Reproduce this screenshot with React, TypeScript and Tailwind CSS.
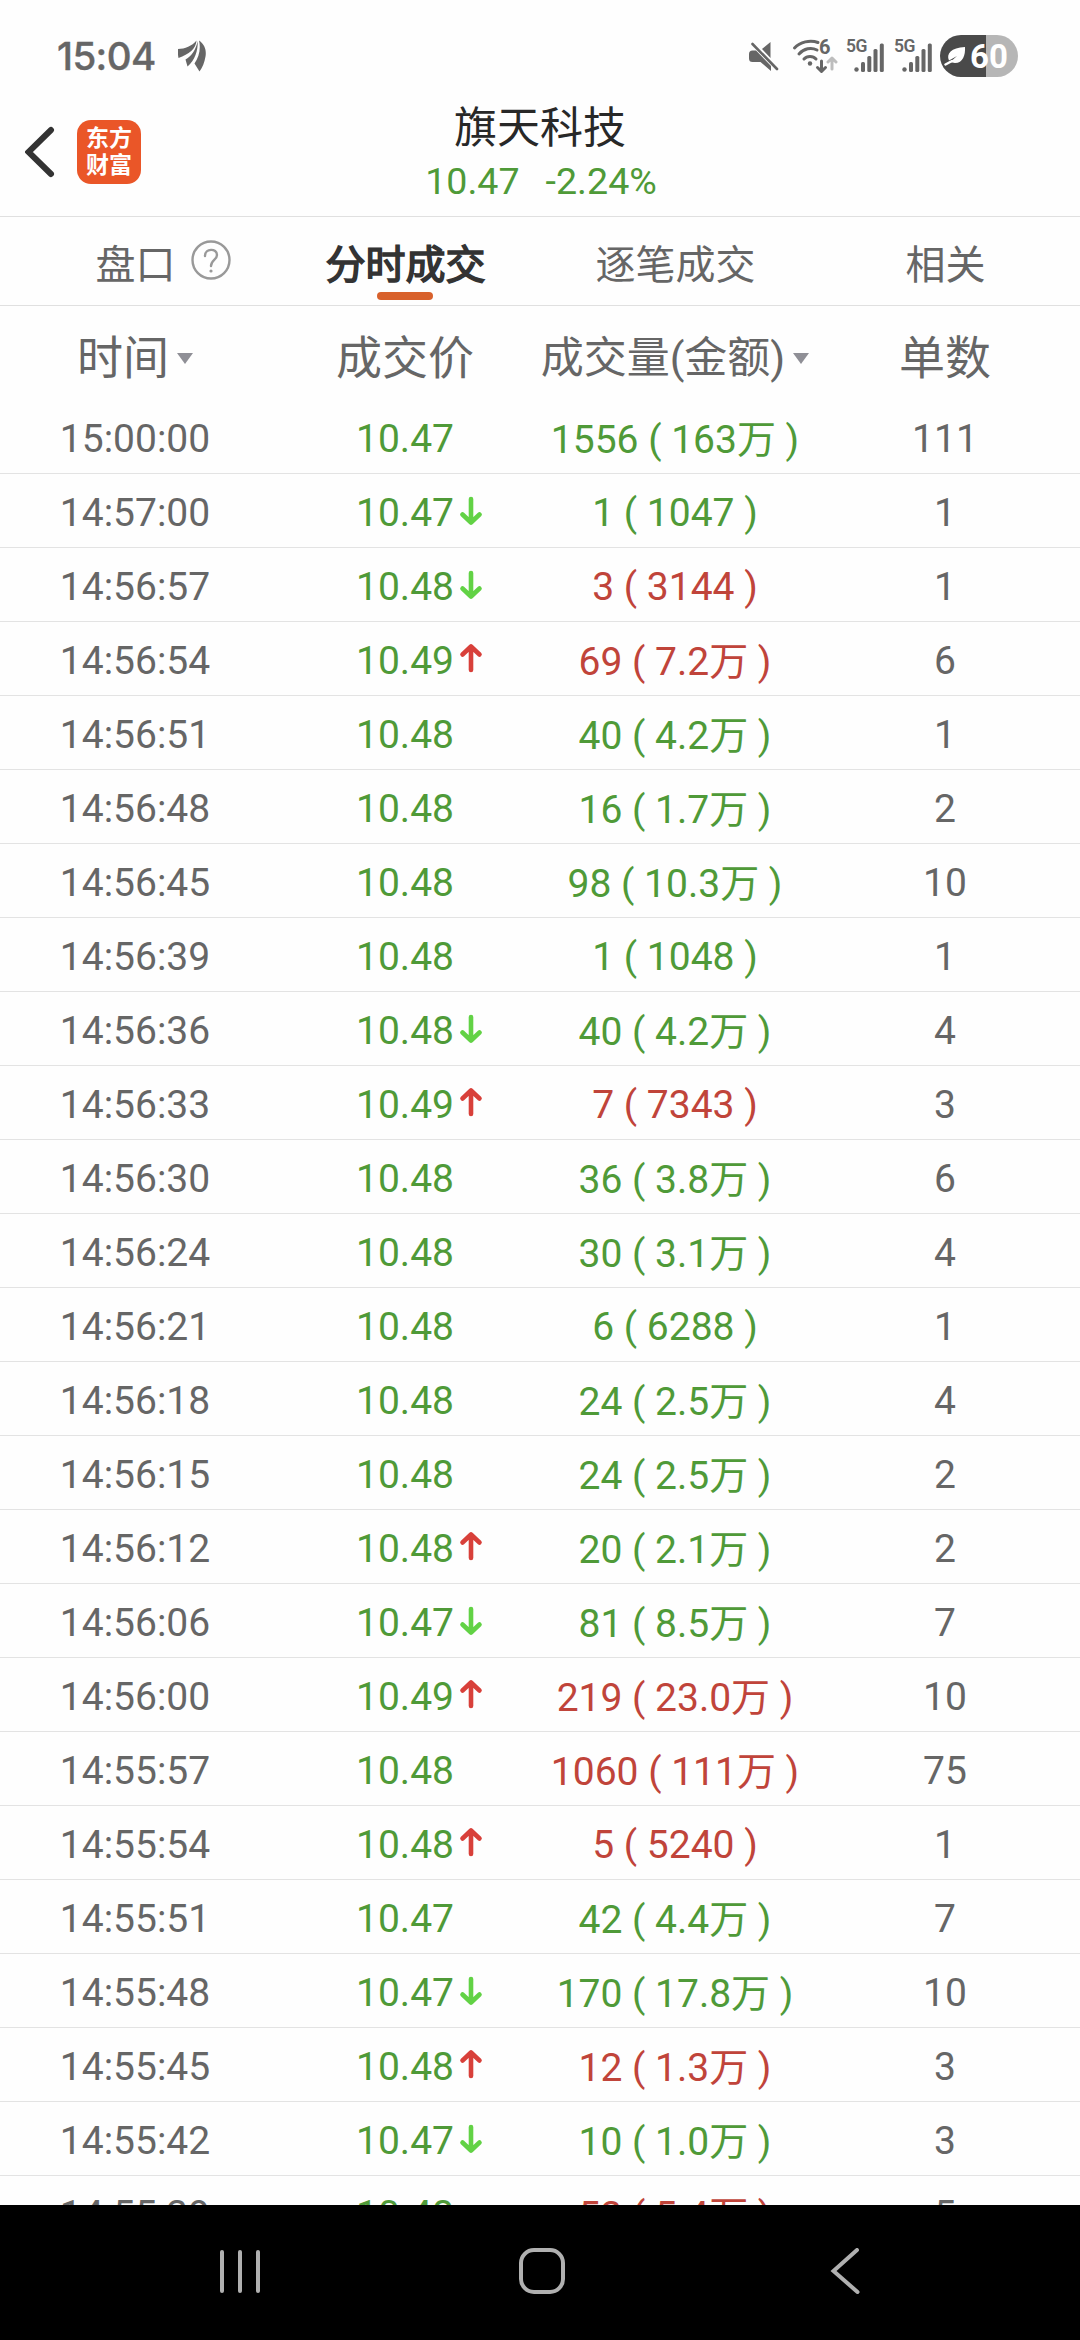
import { clsx } from "clsx";

type Trade = {
  time: string;
  price: string;
  move?: "up" | "down";
  volume: string;
  side: "buy" | "sell";
  count: number;
};

const tabs = [
  { label: "盘口", help: true },
  { label: "分时成交", active: true },
  { label: "逐笔成交" },
  { label: "相关" },
];

const trades: Trade[] = [
  { time: "15:00:00", price: "10.47", volume: "1556 ( 163万 )", side: "sell", count: 111 },
  { time: "14:57:00", price: "10.47", move: "down", volume: "1 ( 1047 )", side: "sell", count: 1 },
  { time: "14:56:57", price: "10.48", move: "down", volume: "3 ( 3144 )", side: "buy", count: 1 },
  { time: "14:56:54", price: "10.49", move: "up", volume: "69 ( 7.2万 )", side: "buy", count: 6 },
  { time: "14:56:51", price: "10.48", volume: "40 ( 4.2万 )", side: "sell", count: 1 },
  { time: "14:56:48", price: "10.48", volume: "16 ( 1.7万 )", side: "sell", count: 2 },
  { time: "14:56:45", price: "10.48", volume: "98 ( 10.3万 )", side: "sell", count: 10 },
  { time: "14:56:39", price: "10.48", volume: "1 ( 1048 )", side: "sell", count: 1 },
  { time: "14:56:36", price: "10.48", move: "down", volume: "40 ( 4.2万 )", side: "sell", count: 4 },
  { time: "14:56:33", price: "10.49", move: "up", volume: "7 ( 7343 )", side: "buy", count: 3 },
  { time: "14:56:30", price: "10.48", volume: "36 ( 3.8万 )", side: "sell", count: 6 },
  { time: "14:56:24", price: "10.48", volume: "30 ( 3.1万 )", side: "sell", count: 4 },
  { time: "14:56:21", price: "10.48", volume: "6 ( 6288 )", side: "sell", count: 1 },
  { time: "14:56:18", price: "10.48", volume: "24 ( 2.5万 )", side: "sell", count: 4 },
  { time: "14:56:15", price: "10.48", volume: "24 ( 2.5万 )", side: "sell", count: 2 },
  { time: "14:56:12", price: "10.48", move: "up", volume: "20 ( 2.1万 )", side: "sell", count: 2 },
  { time: "14:56:06", price: "10.47", move: "down", volume: "81 ( 8.5万 )", side: "sell", count: 7 },
  { time: "14:56:00", price: "10.49", move: "up", volume: "219 ( 23.0万 )", side: "buy", count: 10 },
  { time: "14:55:57", price: "10.48", volume: "1060 ( 111万 )", side: "buy", count: 75 },
  { time: "14:55:54", price: "10.48", move: "up", volume: "5 ( 5240 )", side: "buy", count: 1 },
  { time: "14:55:51", price: "10.47", volume: "42 ( 4.4万 )", side: "sell", count: 7 },
  { time: "14:55:48", price: "10.47", move: "down", volume: "170 ( 17.8万 )", side: "sell", count: 10 },
  { time: "14:55:45", price: "10.48", move: "up", volume: "12 ( 1.3万 )", side: "buy", count: 3 },
  { time: "14:55:42", price: "10.47", move: "down", volume: "10 ( 1.0万 )", side: "sell", count: 3 },
  { time: "14:55:39", price: "10.48", volume: "53 ( 5.4万 )", side: "buy", count: 5 },
];

function MoveArrow({ move }: { move: "up" | "down" }) {
  return (
    <svg
      viewBox="0 0 24 30"
      className={clsx(
        "absolute left-full top-1/2 ml-[5px] h-[30px] w-6 -translate-y-1/2",
        move === "up" ? "-mt-[3px] text-[#d8403a]" : "-mt-[2px] rotate-180 text-[#62d245]",
      )}
      fill="none"
      stroke="currentColor"
      strokeWidth="4.6"
      strokeLinecap="round"
      strokeLinejoin="round"
    >
      <path d="M12 27V4M3.5 11.5 12 3.5l8.5 8" />
    </svg>
  );
}

function Caret() {
  return (
    <svg viewBox="0 0 16 11" className="h-[11px] w-4 text-[#8f8f96]" fill="currentColor">
      <path d="M0 0h16L8 11z" />
    </svg>
  );
}

function WifiIcon() {
  return (
    <div className="relative ml-[13px] h-9 w-[46px]">
      <svg viewBox="0 0 46 36" className="h-9 w-[46px]" fill="none" stroke="currentColor" strokeWidth="3" strokeLinecap="round">
        <path d="M2.5 10C8 4 18 1.5 26 4.5M7 16C12 10.5 19 9 25 12M12 21C15 17.5 21 17.5 24 21" />
        <circle cx="18" cy="25.5" r="2.2" fill="currentColor" stroke="none" />
        <path d="M29.5 23v10M25.5 29.5l4 4 4-4" strokeLinejoin="round" />
        <path d="M40 31V20.5M36 24l4-4 4 4" stroke="#bdbdbd" strokeLinejoin="round" />
      </svg>
      <span className="absolute left-[27px] top-[-1px] text-[20px] font-bold leading-5">6</span>
    </div>
  );
}

function Signal() {
  return (
    <div className="relative h-9 w-10">
      <span className="absolute left-0 top-0 text-[17.5px] font-semibold leading-[17px] tracking-[-0.5px]">5G</span>
      <svg viewBox="0 0 40 36" className="h-9 w-10" fill="currentColor">
        <circle cx="10.5" cy="31.5" r="2.2" />
        <rect x="15" y="24" width="4" height="10" rx="1.5" />
        <rect x="21.3" y="18" width="4" height="16" rx="1.5" />
        <rect x="27.5" y="11" width="4" height="23" rx="1.5" />
        <rect x="33.8" y="5.5" width="4" height="28.5" rx="1.5" />
      </svg>
    </div>
  );
}

function Battery() {
  return (
    <div className="ml-[6px] flex h-[42px] w-[78px] items-center rounded-full bg-[linear-gradient(90deg,#4a4a4a_59%,#b6b6b6_59%)] pl-1 text-white">
      <svg viewBox="0 0 22 20" className="h-5 w-[22px]" fill="currentColor">
        <path d="M21 1c.5 8-2 16-10 16-2 0-3.5-.5-4.5-1.2L13 10 5 14.5C2 8 7 1.5 21 1z" />
        <path d="M1.5 18.5 8 15" stroke="currentColor" strokeWidth="2.5" strokeLinecap="round" />
      </svg>
      <span className="ml-1 text-[33px] font-bold leading-none">60</span>
    </div>
  );
}

function StatusBar() {
  return (
    <div className="flex h-[92px] items-center pl-[57px] pr-[62px] pt-5 text-[#666]">
      <span className="w-[121px] font-['Inter'] text-[38.5px] font-medium leading-none tracking-[-0.6px] [-webkit-text-stroke:0.4px]">15:04</span>
      <svg viewBox="0 0 28 32" className="h-8 w-7" fill="currentColor">
        <path d="M0 9C7 9 14 6 18.5 0.500 18 9 11 14 .5 18 0 15-.5 12 0 9z" />
        <path d="M19.700 1C20 11 17 20 9.500 26.500L7.500 19.500C14 16 18 9 19.700 1z" />
        <path d="M21 .5c6 4 7.500 10 6.500 16-1 6-3 11-6 15l-5-8C21 17 23 9 21 .5z" />
      </svg>
      <svg viewBox="0 0 30 30" className="ml-auto h-[30px] w-[30px]" fill="currentColor">
        <path d="M3.5 9.500H7L22 25v5L11.5 21H3.5Q0 21 0 17.5V13q0-3.5 3.5-3.5zM13 8l8.5-7v16z" />
        <path d="M3.5 3 28 28" stroke="currentColor" strokeWidth="2.6" strokeLinecap="round" />
      </svg>
      <WifiIcon />
      <div className="ml-2 flex gap-2">
        <Signal />
        <Signal />
      </div>
      <Battery />
    </div>
  );
}

function Header() {
  return (
    <header className="flex h-[125px] border-b border-[#e0e0e0]">
      <div className="flex w-[270px] pl-[25px] pt-7">
        <svg viewBox="0 0 30 52" className="mt-[6px] h-[52px] w-[30px]" fill="none" stroke="#333" strokeWidth="6" strokeLinecap="round">
          <path d="M26 4 3.5 26 26 48" />
        </svg>
        <div className="ml-[22px] flex h-16 w-16 flex-col items-center justify-center rounded-[14px] bg-[#ea5628] text-[23px] font-bold leading-[27px] text-white">
          <span>东方</span>
          <span>财富</span>
        </div>
      </div>
      <div className="flex w-[540px] flex-col items-center pt-[13px]">
        <h1 className="text-[43px] leading-[46px] text-[#282828]">旗天科技</h1>
        <p className="mt-2 flex gap-[26px] pl-[2px] text-[37.6px] leading-[44px] text-[#4f9a38]">
          <span>10.47</span>
          <span>-2.24%</span>
        </p>
      </div>
    </header>
  );
}

function NavBar() {
  return (
    <div className="flex h-[135px] shrink-0 items-center bg-black pb-[3px] pl-[220px] text-[#b0b0b0]">
      <div className="flex w-10 justify-between">
        <span className="h-[43px] w-1 rounded-full bg-current" />
        <span className="h-[43px] w-1 rounded-full bg-current" />
        <span className="h-[43px] w-1 rounded-full bg-current" />
      </div>
      <div className="ml-[259px] h-[46px] w-[46px] rounded-[15px] border-4 border-current" />
      <svg viewBox="0 0 30 46" className="ml-[265px] h-[46px] w-[30px]" fill="none" stroke="currentColor" strokeWidth="4" strokeLinecap="round">
        <path d="M27 2 3.5 23 27.5 44" />
      </svg>
    </div>
  );
}

export default function App() {
  return (
    <div className="flex h-[2340px] w-[1080px] flex-col overflow-hidden bg-[#fefefe] font-['Roboto','Noto_Sans_CJK_SC',sans-serif] text-[#666]">
      <StatusBar />
      <Header />

      <nav className="grid h-[89px] grid-cols-4 border-b border-[#e0e0e0] text-[40px]">
        {tabs.map((tab) => (
          <div key={tab.label} className="relative flex items-center justify-center pl-px pt-[10px]">
            <span className={clsx(tab.active && "text-[#333] [-webkit-text-stroke:1.6px]")}>{tab.label}</span>
            {tab.help && (
              <svg viewBox="0 0 40 40" className="absolute left-[191px] top-[23px] h-10 w-10" fill="none" stroke="#999" strokeWidth="2.4">
                <circle cx="20" cy="20" r="18.5" />
                <path d="M14 16c0-8 12-8 12-1 0 5-6 5-6 11" strokeLinecap="round" />
                <circle cx="20" cy="31" r="1.6" fill="#999" stroke="none" />
              </svg>
            )}
            {tab.active && <span className="absolute bottom-[5px] left-[107px] h-2 w-14 rounded-full bg-[#d8612c]" />}
          </div>
        ))}
      </nav>

      <div className="grid h-[94px] grid-cols-4 pt-[11px] text-[46px] leading-[83px]">
        <div className="flex items-center justify-center gap-2">
          时间
          <Caret />
        </div>
        <div className="flex items-center justify-center">成交价</div>
        <div className="flex items-center justify-center gap-2 whitespace-nowrap text-[43px]">
          成交量(金额)
          <Caret />
        </div>
        <div className="flex items-center justify-center">单数</div>
      </div>

      <div className="min-h-0 flex-1 overflow-hidden text-[39px]">
        {trades.map((trade) => (
          <div key={trade.time} className="grid h-[74px] grid-cols-4 items-center border-b border-[#e3e3e3] pt-1 text-center leading-[46px]">
            <span>{trade.time}</span>
            <span className="text-[#4f9a38]">
              <span className="relative">
                {trade.price}
                {trade.move && <MoveArrow move={trade.move} />}
              </span>
            </span>
            <span
              className={clsx(
                trade.side === "buy" ? "text-[#c0443a]" : "text-[#4f9a38]",
                trade.volume.includes("万") && "pt-[2px]",
              )}
            >
              {trade.volume}
            </span>
            <span>{trade.count}</span>
          </div>
        ))}
      </div>

      <NavBar />
    </div>
  );
}
